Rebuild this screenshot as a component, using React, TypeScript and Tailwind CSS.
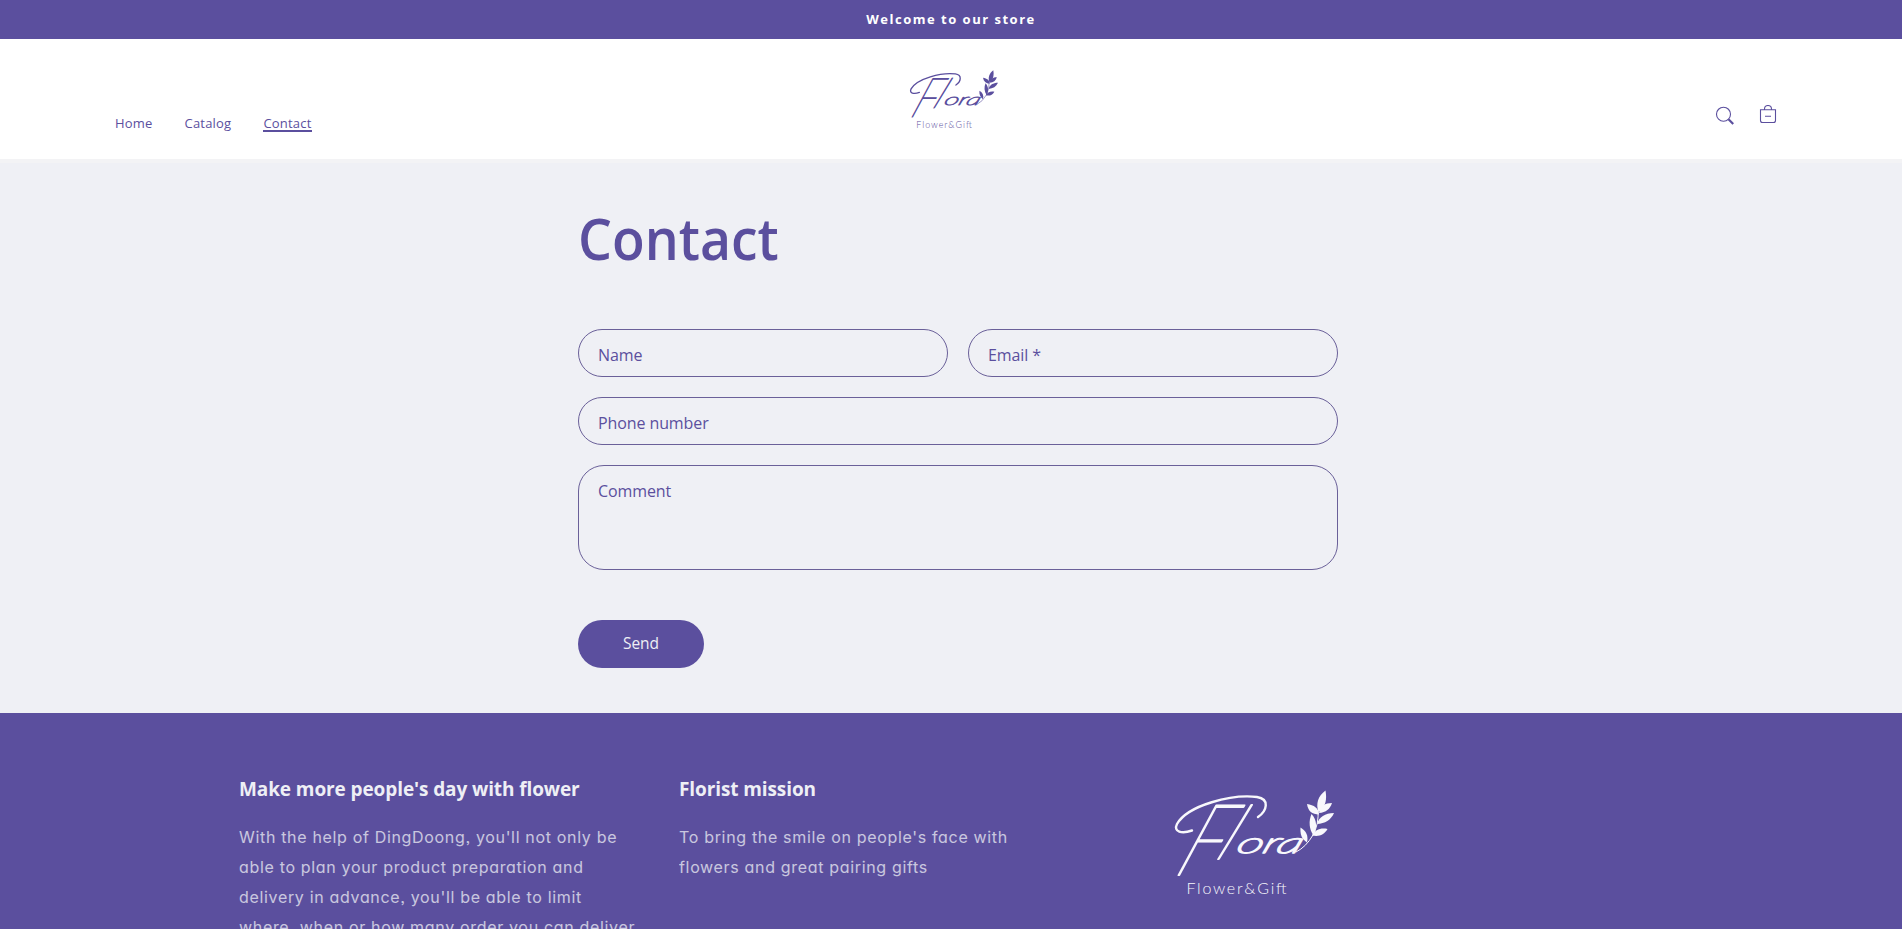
import React from "react";

function Sprig() {
  return (
    <g fill="currentColor">
      <path d="M146 82 Q156 77 163 65 Q169 54 168 40" fill="none" stroke="currentColor" strokeWidth="1" />
      <path d="M175.500 20.500 C177 29 176 37 168.500 42 C165.500 34 168 26 175.500 20.500Z" />
      <path d="M157 34 C164 35 168.500 38 169 44.500 C162 44.500 158 41 157 34Z" />
      <path d="M182 33 C180 39 176 42.500 169 43 C170 36 175 33 182 33Z" />
      <path d="M184 43 C181 50 175 53.500 167 54 C169 47 175 43 184 43Z" />
      <path d="M161.500 44 C167 50 167.500 58 163.500 65.500 C159 59 158.500 51 161.500 44Z" />
      <path d="M177.500 59 C174 65 169 67 162 65.500 C165 59.500 171 57.500 177.500 59Z" />
      <path d="M150.500 57.500 C156.500 61 158.500 66 157 72.500 C151.500 69 150 64 150.500 57.500Z" />
    </g>
  );
}

function Logo({ className }: { className: string }) {
  return (
    <svg viewBox="0 0 200 159" className={className} role="img" aria-label="Flora Flower&Gift">
      <path
        d="M42 60.500 C32 64 23 62 27 54 C38 35 82 24 107 27 C120 29 117 41 108 47"
        fill="none" stroke="currentColor" strokeWidth="2.400" strokeLinecap="round"
      />
      <g fill="currentColor" stroke="currentColor" strokeLinejoin="round" fontFamily="Lato, sans-serif" fontStyle="italic" fontWeight="100">
        <text transform="translate(23 105) skewX(-24)" fontSize="99" strokeWidth="2.200" textLength="40" lengthAdjust="spacingAndGlyphs">F</text>
        <text transform="translate(64 89) skewX(-26)" fontSize="75" strokeWidth="2">l</text>
        <text transform="translate(85 83) skewX(-20)" fontSize="29" strokeWidth="1.700" textLength="65" lengthAdjust="spacingAndGlyphs">ora</text>
      </g>
      <Sprig />
      <text x="36.500" y="124" fontSize="16" fill="currentColor" fontFamily="Lato, sans-serif" fontWeight="300" textLength="100">Flower&amp;Gift</text>
    </svg>
  );
}

function Field({ label, tall }: { label: string; tall?: boolean }) {
  return (
    <label className={"block flex-1 border border-[#6a6099] px-[19px] text-[16px] leading-6 tracking-[-0.1px] text-[#5b4f9e] " + (tall ? "h-[105px] rounded-[26px] pt-[13px]" : "h-12 rounded-[24px] pt-[13px]")}>
      {label}
    </label>
  );
}

const copy = "mt-[19px] font-[Inter,sans-serif] text-[16px] leading-[30px] tracking-[0.67px] whitespace-nowrap opacity-75 [font-feature-settings:'cv11','ss03']";
const heading = "text-[19px] leading-[28px] font-bold tracking-[-0.1px]";

export default function App() {
  return (
    <div className="h-[929px] overflow-hidden bg-[#eff0f5] font-['Open_Sans',sans-serif] text-[#5b4f9e]">
      <div className="flex h-[39px] items-center justify-center bg-[#5b4f9e] text-[13px] font-bold tracking-[1.5px] text-white">
        Welcome to our store
      </div>
      <header className="flex h-[124px] justify-between border-b-4 border-[#f3f3f5] bg-white px-[115px]">
        <nav className="flex w-[600px] gap-8 pt-[73px] text-[13px] leading-[22px] tracking-[0.2px]">
          <a>Home</a>
          <a>Catalog</a>
          <a className="h-[20px] border-b-2 border-[#5b4f9e]">Contact</a>
        </nav>
        <Logo className="mt-[20px] h-[88px] w-[111px]" />
        <div className="flex w-[600px] justify-end gap-[23px] pt-[66px] pr-[9px]">
          <svg className="size-5" viewBox="0 0 20 20" fill="none" stroke="currentColor"><circle cx="8.500" cy="9.200" r="7" strokeWidth="1.100" /><path d="M13.500 14.200l4.700 4.800" strokeWidth="2.200" /></svg>
          <svg className="size-5" viewBox="0 0 20 20" fill="none" stroke="currentColor" strokeWidth="1.100"><path d="M2.500 4.700h15v10.800a2 2 0 0 1-2 2h-11a2 2 0 0 1-2-2zM6.500 4.500V4a3.500 3.500 0 0 1 7 0v.5M7 11.200h6" /></svg>
        </div>
      </header>
      <main className="mx-auto flex h-[550px] w-[760px] translate-x-[7px] flex-col">
        <h1 className="mt-[35px] h-[131px] origin-left scale-x-[0.94] text-[57px] leading-[81px] font-semibold">Contact</h1>
        <form className="flex flex-col gap-5">
          <div className="flex gap-5"><Field label="Name" /><Field label="Email *" /></div>
          <div className="flex"><Field label="Phone number" /></div>
          <div className="flex"><Field label="Comment" tall /></div>
          <button type="button" className="mt-[30px] h-12 w-[126px] rounded-full bg-[#5b4f9e] text-[15.5px] font-medium text-[#eeeff5]">Send</button>
        </form>
      </main>
      <footer className="flex h-[216px] bg-[#5b4f9e] pl-[239px] text-[#eeeff5]">
        <section className="w-[440px] pt-[62px]">
          <h2 className={heading}>Make more people's day with flower</h2>
          <p className={copy}>
            With the help of DingDoong, you'll not only be<br />able to plan your product preparation and<br />delivery in advance, you'll be able to limit<br />where, when or how many order you can deliver
          </p>
        </section>
        <section className="w-[471px] pt-[62px]">
          <h2 className={heading}>Florist mission</h2>
          <p className={copy}>
            To bring the smile on people's face with<br />flowers and great pairing gifts
          </p>
        </section>
        <Logo className="mt-[57px] h-[159px] w-[200px] text-[#f8f8fc]" />
      </footer>
    </div>
  );
}
